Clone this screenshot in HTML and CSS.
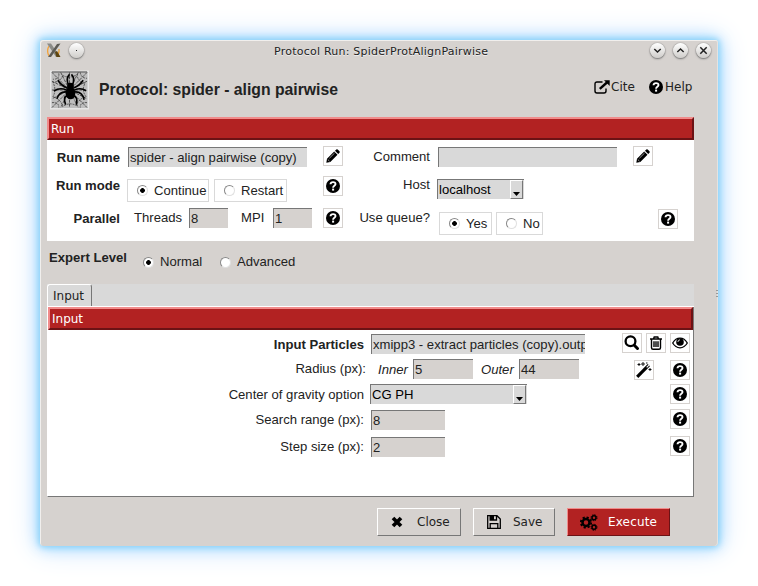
FILE: index.html
```html
<!DOCTYPE html>
<html lang="en">
<head>
<meta charset="utf-8">
<title>Protocol Run: SpiderProtAlignPairwise</title>
<link rel="stylesheet" href="styles.css">
</head>
<body>
<svg class="defs" width="0" height="0">
  <symbol id="help" viewBox="0 0 14 14"><circle cx="7" cy="7" r="7"/><path d="M4.5 5.2C4.7 2.4 9.5 2.4 9.5 5.1 9.5 6.8 7.1 6.7 7.1 8.7" fill="none" stroke="#fff" stroke-width="1.9"/><rect x="6.1" y="9.6" width="2" height="2" fill="#fff"/></symbol>
  <symbol id="pencil" viewBox="0 0 14 14"><path d="M0.3 13.7L1 9.7 8.2 2.5 11.5 5.8 4.3 13zM9 1.7L10.3.4Q11 0 11.7.5L13.5 2.3Q14 3 13.5 3.7L12.2 5z"/><path d="M1.8 10.5L3.5 12.2M3.4 9.2L8.5 4.1" stroke="#fff" stroke-width=".6"/></symbol>
  <symbol id="search" viewBox="0 0 16 16"><circle cx="6.500" cy="6.300" r="4.900" fill="none" stroke="#000" stroke-width="2.300"/><path d="M10.300 10.300L13.500 13.500" stroke="#000" stroke-width="3" stroke-linecap="round"/></symbol>
  <symbol id="trash" viewBox="0 0 14 14"><path d="M1 3H13M4.5 3L5.2 1H8.8L9.5 3M2.5 3V11.8Q2.5 13.3 4 13.3H10Q11.5 13.3 11.5 11.8V3M5 5.2V11M7 5.2V11M9 5.2V11" fill="none" stroke="#000" stroke-width="1.4"/></symbol>
  <symbol id="eye" viewBox="0 0 16 12"><path d="M.7 6Q3.5 1.2 8 1.2T15.3 6Q12.5 10.8 8 10.8T.7 6z" fill="none" stroke="#000" stroke-width="1.3"/><circle cx="8" cy="5" r="3.8"/><path d="M5.9 5Q6 2.9 8 2.8" fill="none" stroke="#fff" stroke-width=".8"/></symbol>
  <symbol id="wand" viewBox="0 0 16 16"><path d="M1.2 14.8L12.8 3.2" stroke="#000" stroke-width="3.2"/><path d="M10.7 5.3L12.9 3.1" stroke="#fff" stroke-width="1.2"/><path d="M3 1V4M1.5 2.5H4.500M7 0V4M5 2H9M14 6V9M12.500 7.500H15.500M10 1H11.500" stroke="#000" stroke-width=".9"/></symbol>
</svg>
<div class="window">
  <header class="titlebar">
    <svg class="logo" viewBox="0 0 14 15"><path d="M2 3Q-.5 7 1.500 12L4 13.500" stroke="#f3a33b" stroke-width="1.300" fill="none"/><path d="M9 13Q12.500 11 12 6" stroke="#e7a13a" stroke-width="1.300" fill="none"/><path d="M0 .5L4 .5 13 14H9z" fill="#8b8b87"/><path d="M13.500 .5L10 1 1 14H4z" fill="#5d5b55"/><path d="M8 9L10 8 13.500 14H9.500z" fill="#5e4510"/></svg>
    <span class="orb pin"></span>
    <h1 class="caption">Protocol Run: SpiderProtAlignPairwise</h1>
    <div class="orbs">
      <span class="orb"><svg viewBox="0 0 15 15"><path d="M4.300 6L7.500 9 10.700 6"/></svg></span>
      <span class="orb"><svg viewBox="0 0 15 15"><path d="M4.300 9L7.500 6 10.700 9"/></svg></span>
      <span class="orb"><svg viewBox="0 0 15 15"><path d="M4.300 4.300L10.700 10.700M10.700 4.300L4.300 10.700"/></svg></span>
    </div>
  </header>
  <div class="heading">
    <svg class="spider" viewBox="0 0 40 40">
      <rect width="40" height="40" fill="#e8e8e8"/><rect x="1.500" y="1.500" width="37" height="37" fill="#bebebe"/><path d="M2 1.500H38" stroke="#777" stroke-width="1.500"/>
      <g fill="none" stroke="#222" stroke-width=".7"><path d="M2 2L38 38M38 2L2 38M20 2V38M2 20H38M2 11L38 29M38 11L2 29M11 2L29 38M29 2L11 38" stroke-dasharray="3 1"/><path d="M13 5Q20 9 28 4 28 12 36 13 32 20 37 27 29 29 27 36 20 32 13 37 11 29 3 27 7 20 3 12 11 12 13 5zM9 3Q10 9 3 9M31 2Q32 8 38 8M2 33Q9 32 9 38M38 33Q31 32 31 38" stroke-dasharray="2 1"/></g>
      <ellipse cx="21" cy="23" rx="5" ry="6.500"/><ellipse cx="21" cy="16" rx="3.500" ry="3.500"/>
      <g fill="none" stroke="#000" stroke-width="1.700"><path d="M19 15Q16 8 20 4M23 15Q26 8 22 4M18 18Q12 16 8 10M24 18Q30 16 34 10M17 20Q10 17 4 21M25 20Q32 17 37 21M17 22Q10 21 7 29M25 22Q33 21 35 30M18 26Q13 26 16 35M24 26Q29 27 27 35"/></g>
    </svg>
    <h2 class="name">Protocol: spider - align pairwise</h2>
    <a class="link cite"><svg width="16" height="14" viewBox="0 0 16 14"><path d="M8.500 2H3Q1 2 1 4V11Q1 13 3 13H10Q12 13 12 11V8.500" fill="none" stroke="#000" stroke-width="1.400"/><path d="M5.800 8.800L13.500 2" stroke="#000" stroke-width="2.400"/><path d="M10 .3H15.700V6z"/></svg><span>Cite</span></a>
    <a class="link"><svg width="14" height="14"><use href="#help"/></svg><span class="help-text">Help</span></a>
  </div>

  <section class="run">
    <h3 class="bar">Run</h3>
    <div class="run-row r1">
      <b class="label">Run name</b>
      <div class="field"><span class="entry full gray">spider - align pairwise (copy)</span></div>
      <button class="ib"><svg width="14" height="14"><use href="#pencil"/></svg></button>
      <span class="label mid">Comment</span>
      <div class="field"><span class="entry full gray"></span></div>
      <button class="ib"><svg width="14" height="14"><use href="#pencil"/></svg></button>
    </div>
    <div class="run-row r2">
      <b class="label">Run mode</b>
      <div class="field radios mode"><label class="radio boxed w82"><i class="dot on"></i>Continue</label><label class="radio boxed w73"><i class="dot"></i>Restart</label></div>
      <button class="ib"><svg width="14" height="14"><use href="#help"/></svg></button>
      <span class="label mid">Host</span>
      <div class="field host"><span class="combo">localhost<i class="arrow"></i></span></div>
    </div>
    <div class="run-row r3">
      <b class="label">Parallel</b>
      <div class="field"><span class="sub threads">Threads</span><span class="entry tiny">8</span><span class="sub mpi">MPI</span><span class="entry tiny">1</span></div>
      <button class="ib"><svg width="14" height="14"><use href="#help"/></svg></button>
      <span class="label mid">Use queue?</span>
      <div class="field radios queue"><label class="radio boxed w53"><i class="dot on"></i>Yes</label><label class="radio boxed w47"><i class="dot"></i>No</label></div>
      <button class="ib far"><svg width="14" height="14"><use href="#help"/></svg></button>
    </div>
  </section>

  <div class="expert"><b>Expert Level</b><label class="radio normal"><i class="dot on"></i>Normal</label><label class="radio adv"><i class="dot"></i>Advanced</label><span class="grip"></span></div>

  <div class="tabs"><span class="tab">Input</span></div>
  <section class="input">
    <h3 class="bar">Input</h3>
    <div class="param p1"><b class="plabel">Input Particles</b><span class="entry particles gray">xmipp3 - extract particles (copy).outp</span><div class="tools"><button class="ib"><svg width="16" height="16"><use href="#search"/></svg></button><button class="ib"><svg width="14" height="14"><use href="#trash"/></svg></button><button class="ib"><svg width="16" height="12"><use href="#eye"/></svg></button></div></div>
    <div class="param p2"><span class="plabel radius">Radius (px):</span><i class="it inner">Inner</i><span class="entry w60">5</span><i class="it outer">Outer</i><span class="entry w60">44</span><div class="tools wide"><button class="ib"><svg width="16" height="16"><use href="#wand"/></svg></button><button class="ib"><svg width="14" height="14"><use href="#help"/></svg></button></div></div>
    <div class="param p3"><span class="plabel">Center of gravity option</span><span class="combo cg">CG PH<i class="arrow"></i></span><div class="tools"><button class="ib"><svg width="14" height="14"><use href="#help"/></svg></button></div></div>
    <div class="param p4"><span class="plabel">Search range (px):</span><span class="entry w74">8</span><div class="tools"><button class="ib"><svg width="14" height="14"><use href="#help"/></svg></button></div></div>
    <div class="param p5"><span class="plabel">Step size (px):</span><span class="entry w74">2</span><div class="tools"><button class="ib"><svg width="14" height="14"><use href="#help"/></svg></button></div></div>
  </section>

  <footer class="actions">
    <button class="btn close"><svg width="12" height="12" viewBox="0 0 12 12"><path d="M2 2L10 10M10 2L2 10" stroke="#000" stroke-width="3.700"/></svg><span>Close</span></button>
    <button class="btn save"><svg width="14" height="14" viewBox="0 0 14 14"><path d="M.7.7H10L13.300 4V13.300H.7zM3.200.7V5H9.500V.7M3.200 13V8.700H10.800V13" fill="none" stroke="#000" stroke-width="1.300"/><path d="M3 1H7V5H3z"/></svg><span>Save</span></button>
    <button class="btn execute"><svg width="18" height="17" viewBox="0 0 18 17"><g fill="none" stroke="#000"><circle cx="6" cy="8.500" r="3.500" stroke-width="2.500"/><circle cx="6" cy="8.500" r="5.200" stroke-width="1.800" stroke-dasharray="2.200 1.880"/><circle cx="14" cy="3.700" r="2" stroke-width="1.500"/><circle cx="14" cy="3.700" r="3" stroke-width="1" stroke-dasharray="1.400 .956"/><circle cx="14" cy="13.300" r="2" stroke-width="1.500"/><circle cx="14" cy="13.300" r="3" stroke-width="1" stroke-dasharray="1.400 .956"/></g></svg><span>Execute</span></button>
  </footer>
</div>
</body>
</html>
```
FILE: styles.css
```css
* { box-sizing: border-box; }
body { margin: 0; padding: 40px; width: 758px; height: 586px; background: #fff; overflow: hidden; font: 13.1px/20px "Liberation Sans", Arial, sans-serif; color: #222; }
h1, h2, h3 { margin: 0; font-weight: normal; }
button { padding: 0; font: inherit; color: inherit; }
svg { display: block; flex: none; }
.defs { position: absolute; }
.window { width: 678px; height: 506px; padding: 0 24px 0 7px; background: #d6d2cf; border-radius: 3px 3px 4px 4px; box-shadow: inset 1px 1px #f1efed, inset -1px 0 #e5e3e1, 0 0 6px 1px #84d0f9, 0 0 16px 1px #9bd8fc, 0 0 30px 2px #cfe3ff; }
.titlebar { display: flex; height: 21px; align-items: center; margin-right: -18px; }
.logo { width: 14px; height: 15px; }
.orb { display: block; width: 15px; height: 15px; border-radius: 50%; background: linear-gradient(#fff, #cfcdca); box-shadow: 0 0 1px #555, 0 1px 2px #777; }
.orb svg { width: 15px; height: 15px; fill: none; stroke: #222; stroke-width: 1.5; }
.pin { margin-left: 8px; background: radial-gradient(circle, #222 0 .7px, transparent 1px), linear-gradient(#fff, #cfcdca); }
.caption { margin-left: 190px; padding-top: 2px; white-space: nowrap; font: 11px/22px "DejaVu Sans", sans-serif; letter-spacing: .23px; color: #222; text-shadow: 0 1px #eee; }
.orbs { display: flex; gap: 8px; margin-left: auto; margin-right: 1px; }
.heading { display: flex; height: 56px; padding: 9px 0 0 3px; }
.spider { width: 39px; height: 40px; }
.name { width: 491px; margin-left: 10px; padding-top: 8px; font: bold 15.75px/24px "Liberation Sans", Arial, sans-serif; }
.link { display: flex; height: 16px; margin-top: 9px; font: 12px/16px "DejaVu Sans", sans-serif; white-space: nowrap; }
.cite { width: 55px; margin-left: 4px; }
.cite span { margin-left: 1px; }
.link svg { margin-top: 1px; }
.help-text { margin-left: 2px; }
.run { width: 647px; height: 124px; background: #fff; }
.bar { height: 23px; border: 2px solid; border-color: #f18b8b #6c1215 #6c1215 #f18b8b; background: #b22222; padding-left: 2px; font: 12px/20px "DejaVu Sans", sans-serif; color: #fff; }
.run-row { display: flex; align-items: flex-start; height: 31px; white-space: nowrap; }
.label { width: 73px; margin-right: 8px; text-align: right; }
.label.mid { width: 87px; }
.field { display: flex; width: 184px; margin-right: 11px; }
.r1 { padding-top: 6px; }
.r1 .label { margin-top: 2px; }
.r1 .mid { margin-top: 1px; }
.r1 .field { margin-top: 1px; }
.r2 { padding-top: 5px; }
.r2 .label { margin-top: 0; }
.r2 .mid { margin-top: -1px; }
.r2 .field { margin-top: 3px; }
.r3 { padding-top: 6px; }
.r3 .label { margin-top: 1px; }
.r3 .mid { margin-top: 0; }
.far { margin-left: 25px; margin-top: 1px; }
.entry { display: block; height: 20px; padding-left: 1px; border-left: 1px solid #777; border-top: 1px solid #777; background: #d6d2cf; overflow: hidden; white-space: nowrap; line-height: 20px; }
.gray { background: #d9d9d9; }
.full { width: 179px; }
.tiny { width: 39px; }
.ib { display: flex; flex: none; width: 20px; height: 20px; align-items: center; justify-content: center; border: 1px solid #d6d2cf; background: #fff; }
.radios { gap: 5px; margin-left: -1px; margin-right: 12px; }
.queue { gap: 4px; margin-left: 1px; margin-right: 10px; }
.r3 .queue { margin-top: 4px; }
.radio { display: flex; align-items: center; white-space: nowrap; }
.boxed { height: 23px; padding-left: 9px; border: 1px solid #d9d9d9; }
.dot { display: block; flex: none; width: 11px; height: 11px; margin-right: 6px; border: 1px solid; border-color: #888 #e0e0e0 #e0e0e0 #888; border-radius: 50%; background: #fff; }
.on { background: radial-gradient(circle, #000 0 2px, #fff 2.700px); }
.w82 { width: 82px; }
.w73 { width: 73px; }
.w53 { width: 53px; }
.w47 { width: 47px; }
.host { margin-left: -1px; }
.combo { display: flex; justify-content: space-between; width: 87px; height: 20px; padding: 0 1px; border-left: 1px solid #777; border-top: 1px solid #777; background: #d9d9d9; color: #000; line-height: 20px; }
.arrow { width: 13px; height: 19px; padding: 11px 0 0 2px; border: 1px solid; border-color: #fff #777 #777 #fff; background: #d9d9d9; }
.arrow::before { content: ""; display: block; width: 7px; height: 4px; background: #000; clip-path: polygon(0 0, 100% 0, 50% 100%); }
.sub { height: 20px; }
.threads { width: 61px; padding-left: 6px; }
.mpi { width: 45px; padding-left: 13px; }
.expert { display: flex; height: 43px; padding: 7px 0 0 2px; }
.expert .radio { height: 20px; margin-top: 4px; }
.normal { width: 77px; margin-left: 17px; }
.expert b { width: 77px; white-space: nowrap; }
.grip { width: 2px; height: 8px; margin: 42px -24px 0 auto; background: repeating-linear-gradient(#999 0 1px, transparent 1px 3px); }
.tabs { width: 647px; height: 23px; background: #d9d9d9; border-bottom: 1px solid #fff; }
.tab { display: block; width: 45px; height: 22px; border: 1px solid; border-color: #fff #777 #d9d9d9 #fff; border-radius: 3px 3px 0 0; border-bottom: 0; padding-left: 5px; font: 12px/22px "DejaVu Sans", sans-serif; }
.input { width: 647px; height: 190px; background: #fff; border: solid; border-color: #fff #777 #777 #fff; border-width: 0 1px 1px 1px; }
.param { display: flex; align-items: flex-start; padding-right: 3px; white-space: nowrap; }
.plabel { width: 316px; margin-right: 7px; text-align: right; }
.tools { display: flex; gap: 4px; margin-left: auto; }
.wide { gap: 16px; }
.p1 { height: 29px; padding-top: 3px; }
.p1 .plabel { margin-top: 2px; }
.p1 .entry { margin-top: 1px; }
.p2 { height: 25px; }
.p2 .plabel { width: 318px; margin-right: 12px; }
.p2 .tools { margin-top: 1px; }
.p2 .it { margin-top: 1px; }
.p3 { height: 25px; }
.p3 .plabel { margin-right: 6px; margin-top: 1px; }
.p4 { height: 27px; }
.p4 .entry, .p5 .entry { margin-top: 1px; }
.p4 .plabel, .p5 .plabel { margin-top: 1px; }
.particles { width: 214px; }
.w60 { width: 60px; }
.w74 { width: 74px; }
.inner { width: 35px; }
.outer { width: 38px; margin-left: 8px; }
.cg { width: 157px; }
.actions { display: flex; gap: 12px; padding: 11px 0 0 330px; }
.btn { display: flex; align-items: center; width: 84px; height: 28px; border: 1px solid; border-color: #fff #777 #777 #fff; background: #d6d2cf; font: 12px/20px "DejaVu Sans", sans-serif; }
.close { padding-left: 13px; }
.close span { margin-left: 14px; }
.save { width: 82px; padding-left: 13px; }
.save span { margin-left: 12px; }
.execute { width: 103px; padding-left: 12px; background: #b22222; border-color: #f18b8b #6c1215 #6c1215 #f18b8b; color: #fff; }
.execute span { margin-left: 10px; letter-spacing: .15px; }
```
